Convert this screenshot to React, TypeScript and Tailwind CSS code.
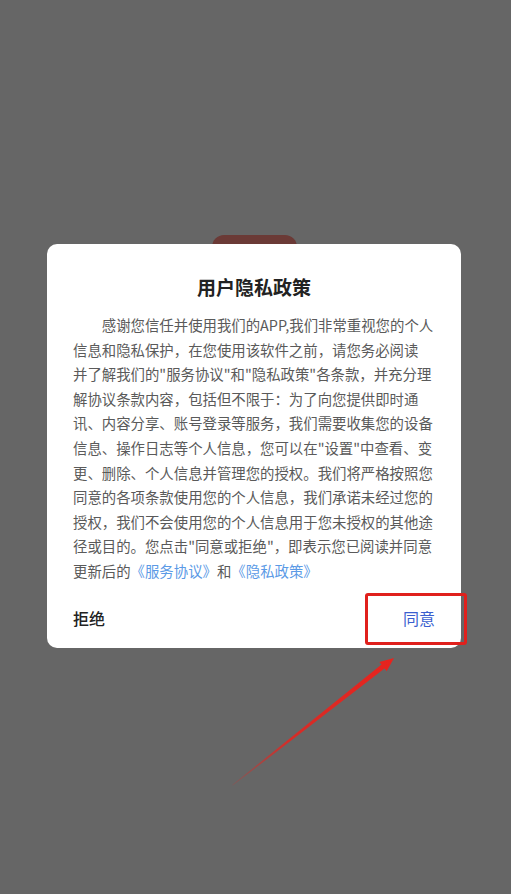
import React from 'react';

const lines: string[] = [
  '信息和隐私保护，在您使用该软件之前，请您务必阅读',
  '并了解我们的"服务协议"和"隐私政策"各条款，并充分理',
  '解协议条款内容，包括但不限于：为了向您提供即时通',
  '讯、内容分享、账号登录等服务，我们需要收集您的设备',
  '信息、操作日志等个人信息，您可以在"设置"中查看、变',
  '更、删除、个人信息并管理您的授权。我们将严格按照您',
  '同意的各项条款使用您的个人信息，我们承诺未经过您的',
  '授权，我们不会使用您的个人信息用于您未授权的其他途',
  '径或目的。您点击"同意或拒绝"，即表示您已阅读并同意',
];

const Arrow = () => (
  <svg className="absolute inset-0 pointer-events-none" width="511" height="894" viewBox="0 0 511 894">
    <defs>
      <linearGradient id="fade" x1="232" y1="785" x2="394" y2="658" gradientUnits="userSpaceOnUse">
        <stop offset="0" stopColor="#e8231d" stopOpacity="0.15" />
        <stop offset="0.35" stopColor="#e8231d" stopOpacity="0.85" />
        <stop offset="1" stopColor="#e8231d" />
      </linearGradient>
    </defs>
    <polygon
      points="232,785 381.5,664.6 379.3,661.9 394,658 386.7,671.3 384.5,668.6 232.8,785.6"
      fill="url(#fade)"
    />
  </svg>
);

export default function App() {
  return (
    <div
      className="relative w-full h-[894px] bg-[#666666] overflow-hidden"
      style={{ fontFamily: '"Noto Sans CJK SC", "Noto Sans", sans-serif' }}
    >
      {/* page element peeking behind the overlay */}
      <div className="absolute left-[212px] top-[235px] w-[85px] h-[20px] rounded-t-[12px] bg-[#6b3a36]" />

      <div className="pt-[244px] pl-[47px]">
        <div className="relative w-[414px] bg-white rounded-[10px] pt-[29px] pb-[6px]">
          <h2 className="text-center text-[19px] leading-[28px] font-bold text-[#222222]">用户隐私政策</h2>

          <div className="mt-[12px] px-[26px] text-[14.4px] leading-[24.6px] text-[#5a5a5a] whitespace-nowrap">
            <p className="pl-[28.8px]">感谢您信任并使用我们的APP,我们非常重视您的个人</p>
            {lines.map((l) => (
              <p key={l}>{l}</p>
            ))}
            <p>
              更新后的<span className="text-[#5b9ae6]">《服务协议》</span>和
              <span className="text-[#5b9ae6]">《隐私政策》</span>
            </p>
          </div>

          <div className="mt-[10px] h-[48px] px-[26px] flex items-center justify-between">
            <span className="text-[16px] font-medium text-[#222222]">拒绝</span>
            <span className="text-[16px] text-[#3b5fcf]">同意</span>
          </div>

          {/* highlight box */}
          <div className="absolute left-[318px] top-[349px] w-[102px] h-[52px] border-[3px] border-[#e0201c] rounded-[3px]" />
        </div>
      </div>

      <Arrow />
    </div>
  );
}
